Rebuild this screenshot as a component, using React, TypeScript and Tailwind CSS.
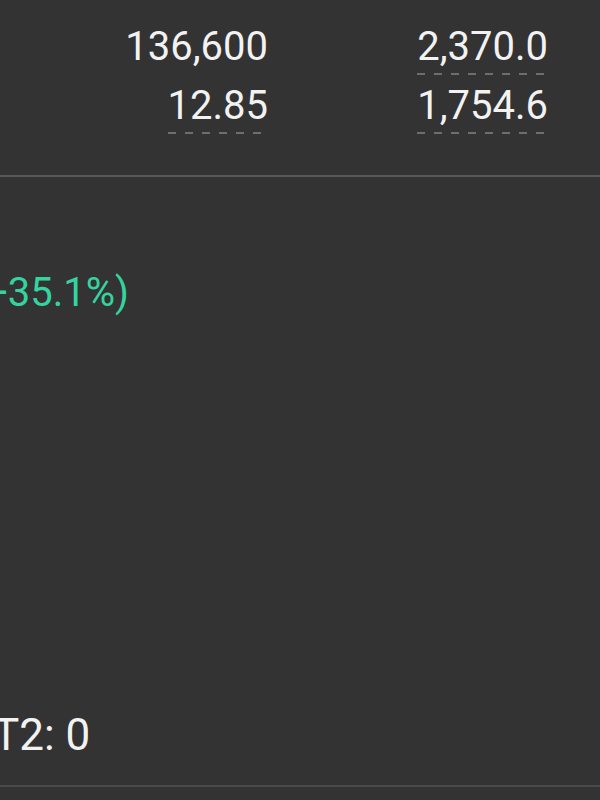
import React from "react";

type Cell = { value: string; dashed?: boolean };

const rows: Cell[][] = [
  [{ value: "136,600" }, { value: "2,370.0", dashed: true }],
  [{ value: "12.85", dashed: true }, { value: "1,754.6", dashed: true }],
];

function Value({ cell }: { cell: Cell }) {
  return (
    <div className="flex flex-col items-end">
      <span className="text-[40px] leading-[44px] text-[#f2f2f2]">{cell.value}</span>
      {/* dotted hint underline */}
      <div
        className={`mt-[4px] h-[2px] w-full ${
          cell.dashed
            ? "bg-[repeating-linear-gradient(90deg,#6e6e6e_0_8px,transparent_8px_17px)]"
            : ""
        }`}
      />
    </div>
  );
}

export default function App() {
  return (
    <div className="w-[600px] h-[800px] overflow-hidden bg-[#333333] font-['Roboto',sans-serif] flex flex-col">
      {/* stats rows */}
      <div className="flex flex-col gap-[9px] pt-[25px] pr-[52px] h-[175px]">
        {rows.map((row, i) => (
          <div key={i} className="flex justify-end">
            <div className="w-[268px] flex justify-end">
              <Value cell={row[0]} />
            </div>
            <div className="w-[280px] flex justify-end">
              <Value cell={row[1]} />
            </div>
          </div>
        ))}
      </div>
      <div className="h-[2px] bg-[#595959]" />

      {/* change */}
      <div className="pt-[93px] -ml-[15px]">
        <span className="text-[40px] leading-[46px] text-[#35d39f]">+35.1%)</span>
      </div>

      <div className="flex-1" />

      {/* footer counter */}
      <div className="-ml-[7px] pb-[25px]">
        <span className="text-[44px] leading-[50px] text-[#f2f2f2]">T2: 0</span>
      </div>
      <div className="h-[2px] bg-[#4a4a4a]" />
      <div className="h-[13px]" />
    </div>
  );
}
